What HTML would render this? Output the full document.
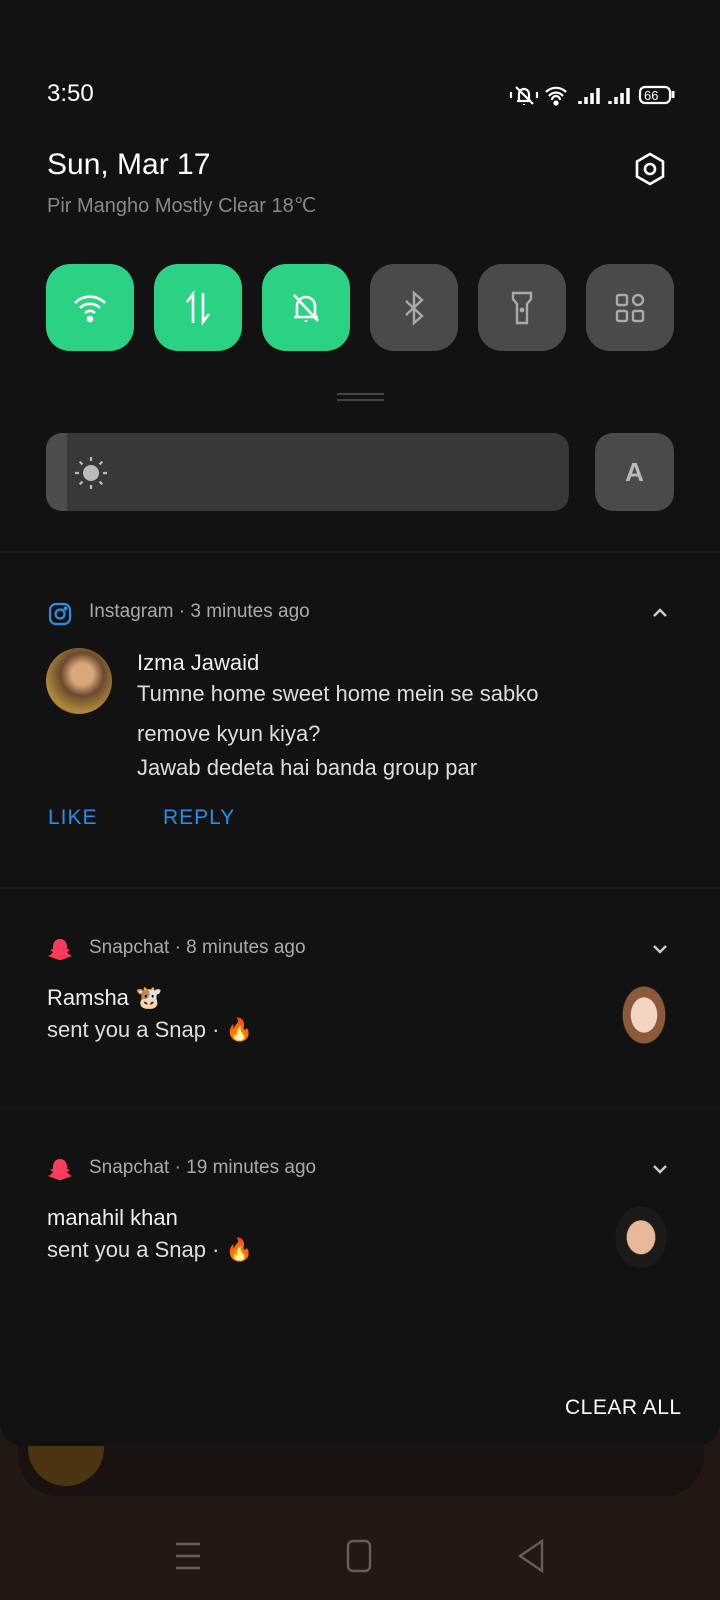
<!DOCTYPE html>
<html><head><meta charset="utf-8"><style>
*{margin:0;padding:0;box-sizing:border-box}
body{width:720px;height:1600px;background:#231814;font-family:"Liberation Sans",sans-serif;position:relative;overflow:hidden;color:#eee}
.panel{position:absolute;left:0;top:0;width:720px;height:1446px;background:#121212;border-radius:0 0 22px 22px}
.a{position:absolute;white-space:nowrap}
.tile{position:absolute;top:264px;width:88px;height:87px;border-radius:24px;display:flex;align-items:center;justify-content:center}
.g{background:#2cd283}.d{background:#4a4a4a}
.sep{position:absolute;left:0;width:720px;height:2px;background:#181818}
.meta{font-size:19px;color:#aaa}
.txt{font-size:22px;color:#ddd}
</style></head><body>
<div class="a" style="left:0;top:1430px;width:720px;height:170px;background:#231814"></div>
<div class="a" style="left:18px;top:1400px;width:686px;height:96px;border-radius:40px;background:#1a1210"></div>
<div class="a" style="left:28px;top:1410px;width:76px;height:76px;border-radius:50%;background:#4a3510"></div>
<div class="panel"></div>
<div class="a" style="left:47px;top:80px;font-size:24px;color:#fff">3:50</div>
<svg class="a" style="left:508px;top:82px" width="196" height="26" viewBox="0 0 196 26" fill="none" stroke="#fff" stroke-width="2.2">
<path d="M9 19h14M11 19v-7a5 5 0 0 1 10 0v7M8 5l17 17M16 22v1M3 10v6M29 10v6"/>
<path d="M38 10a14 14 0 0 1 20 0M41 14a9 9 0 0 1 14 0M44 18a4 4 0 0 1 8 0"/><circle cx="48" cy="21" r="1.5" fill="#fff"/>
<path d="M72 22v-3M78 22v-7M84 22v-11M90 22v-16M102 22v-3M108 22v-7M114 22v-11M120 22v-16" stroke-width="3.5"/>
<rect x="132" y="5" width="30" height="16" rx="5"/><path d="M165 9v7" stroke-width="3"/>
<text x="136" y="18" font-size="13" fill="#fff" stroke="none" font-family="Liberation Sans">66</text>
</svg>
<div class="a" style="left:47px;top:148px;font-size:30px;color:#fff">Sun, Mar 17</div>
<div class="a" style="left:47px;top:193px;font-size:20px;color:#888">Pir Mangho Mostly Clear 18℃</div>
<svg class="a" style="left:632px;top:151px" width="36" height="36" viewBox="0 0 36 36" fill="none" stroke="#fff" stroke-width="2.6"><path d="M18 3l13 7.5v15L18 33 5 25.5v-15z"/><circle cx="18" cy="18" r="5"/></svg>
<div class="tile g" style="left:46px"><svg width="40" height="40" viewBox="0 0 40 40" fill="none" stroke="#fff" stroke-width="2.6"><path d="M5 15a21 21 0 0 1 30 0M10 20a14 14 0 0 1 20 0M15 25a7 7 0 0 1 10 0"/><circle cx="20" cy="31" r="2" fill="#fff"/></svg></div>
<div class="tile g" style="left:154px"><svg width="40" height="40" viewBox="0 0 40 40" fill="none" stroke="#fff" stroke-width="2.6"><path d="M15 35V6L9 14M25 5v29l6-8"/></svg></div>
<div class="tile g" style="left:262px"><svg width="40" height="40" viewBox="0 0 40 40" fill="none" stroke="#fff" stroke-width="2.6"><path d="M8 29h24M11 29V18a9 9 0 0 1 18 0v11M8 7l24 26M20 32v2"/></svg></div>
<div class="tile d" style="left:370px"><svg width="40" height="40" viewBox="0 0 40 40" fill="none" stroke="#aaa" stroke-width="2.4"><path d="M12 13l16 15-8 7V5l8 7-16 15"/></svg></div>
<div class="tile d" style="left:478px"><svg width="40" height="40" viewBox="0 0 40 40" fill="none" stroke="#aaa" stroke-width="2.4"><path d="M11 5h18v6l-4 5v19H15V16l-4-5z"/><circle cx="20" cy="22" r="1.2" fill="#aaa"/></svg></div>
<div class="tile d" style="left:586px"><svg width="40" height="40" viewBox="0 0 40 40" fill="none" stroke="#aaa" stroke-width="2.4"><rect x="7" y="7" width="10" height="10" rx="1.5"/><circle cx="28" cy="12" r="5"/><rect x="7" y="23" width="10" height="10" rx="1.5"/><rect x="23" y="23" width="10" height="10" rx="1.5"/></svg></div>
<div class="a" style="left:337px;top:393px;width:47px;height:2px;background:#444"></div>
<div class="a" style="left:337px;top:399px;width:47px;height:2px;background:#444"></div>
<div class="a" style="left:46px;top:433px;width:523px;height:78px;border-radius:16px;background:#383838;overflow:hidden"><div style="width:21px;height:78px;background:#4d4d4d"></div></div>
<svg class="a" style="left:74px;top:456px" width="34" height="34" viewBox="0 0 34 34"><circle cx="17" cy="17" r="8" fill="#bbb"/><g stroke="#bbb" stroke-width="2.2"><path d="M17 1v4M17 29v4M1 17h4M29 17h4M5.7 5.7l2.8 2.8M25.5 25.5l2.8 2.8M5.7 28.3l2.8-2.8M25.5 8.5l2.8-2.8"/></g></svg>
<div class="a" style="left:595px;top:433px;width:79px;height:78px;border-radius:18px;background:#4a4a4a;color:#bbb;font-size:26px;font-weight:bold;text-align:center;line-height:78px">A</div>
<div class="sep" style="top:551px"></div>
<svg class="a" style="left:48px;top:602px" width="24" height="24" viewBox="0 0 24 24" fill="none" stroke="#2a8fe0" stroke-width="2.2"><rect x="2" y="2" width="20" height="20" rx="6"/><circle cx="12" cy="12" r="4.5"/><circle cx="17.5" cy="6.5" r="1" fill="#2a8fe0"/></svg>
<div class="a meta" style="left:89px;top:601px">Instagram · 3 minutes ago</div>
<svg class="a" style="left:651px;top:607px" width="18" height="12" viewBox="0 0 18 12" fill="none" stroke="#ccc" stroke-width="2.4"><path d="M3 9l6-6 6 6"/></svg>
<div class="a" style="left:46px;top:648px;width:66px;height:66px;border-radius:50%;background:radial-gradient(circle at 55% 40%,#d9a77a 0 20%,#6b4a2e 40%,#b08a3a 70%,#4a3a24)"></div>
<div class="a txt" style="left:137px;top:650px;color:#eee">Izma Jawaid</div>
<div class="a txt" style="left:137px;top:681px">Tumne home sweet home mein se sabko</div>
<div class="a txt" style="left:137px;top:721px">remove kyun kiya?</div>
<div class="a txt" style="left:137px;top:755px">Jawab dedeta hai banda group par</div>
<div class="a" style="left:48px;top:806px;font-size:21px;color:#2a8fe0;letter-spacing:1px">LIKE</div>
<div class="a" style="left:163px;top:806px;font-size:21px;color:#2a8fe0;letter-spacing:1px">REPLY</div>
<div class="sep" style="top:887px"></div>
<svg class="a" style="left:47px;top:937px" width="26" height="25" viewBox="0 0 26 25"><path d="M13 2c5 0 7 4 7 8v2l3 1-3 2c1 2 3 3 5 4-2 1-4 1-5 2-2 0-4 2-7 2s-5-2-7-2c-1-1-3-1-5-2 2-1 4-2 5-4l-3-2 3-1v-2c0-4 2-8 7-8z" fill="#ff3b5c"/></svg>
<div class="a meta" style="left:89px;top:937px">Snapchat · 8 minutes ago</div>
<svg class="a" style="left:651px;top:943px" width="18" height="12" viewBox="0 0 18 12" fill="none" stroke="#ccc" stroke-width="2.4"><path d="M3 3l6 6 6-6"/></svg>
<div class="a txt" style="left:47px;top:985px;color:#eee">Ramsha 🐮</div>
<div class="a txt" style="left:47px;top:1017px">sent you a Snap · 🔥</div>
<div class="a" style="left:620px;top:983px;width:48px;height:64px;border-radius:45%;background:radial-gradient(ellipse at 50% 50%,#f2d4c2 0 38%,#8a5a3a 40% 62%,transparent 64%)"></div>
<div class="sep" style="top:1107px"></div>
<svg class="a" style="left:47px;top:1157px" width="26" height="25" viewBox="0 0 26 25"><path d="M13 2c5 0 7 4 7 8v2l3 1-3 2c1 2 3 3 5 4-2 1-4 1-5 2-2 0-4 2-7 2s-5-2-7-2c-1-1-3-1-5-2 2-1 4-2 5-4l-3-2 3-1v-2c0-4 2-8 7-8z" fill="#ff3b5c"/></svg>
<div class="a meta" style="left:89px;top:1157px">Snapchat · 19 minutes ago</div>
<svg class="a" style="left:651px;top:1163px" width="18" height="12" viewBox="0 0 18 12" fill="none" stroke="#ccc" stroke-width="2.4"><path d="M3 3l6 6 6-6"/></svg>
<div class="a txt" style="left:47px;top:1205px;color:#eee">manahil khan</div>
<div class="a txt" style="left:47px;top:1237px">sent you a Snap · 🔥</div>
<div class="a" style="left:612px;top:1203px;width:58px;height:66px;border-radius:45%;background:radial-gradient(ellipse at 50% 52%,#e8b89a 0 34%,#1a1a1a 36% 62%,transparent 64%)"></div>
<div class="a" style="left:565px;top:1396px;font-size:21px;color:#fff;letter-spacing:0.5px">CLEAR ALL</div>
<svg class="a" style="left:170px;top:1538px" width="380" height="36" viewBox="0 0 380 36" fill="none" stroke="#6a5c57" stroke-width="2.4"><path d="M6 6h24M6 18h24M6 30h24"/><rect x="178" y="3" width="22" height="30" rx="5"/><path d="M372 3L350 18l22 15z"/></svg>
</body></html>
